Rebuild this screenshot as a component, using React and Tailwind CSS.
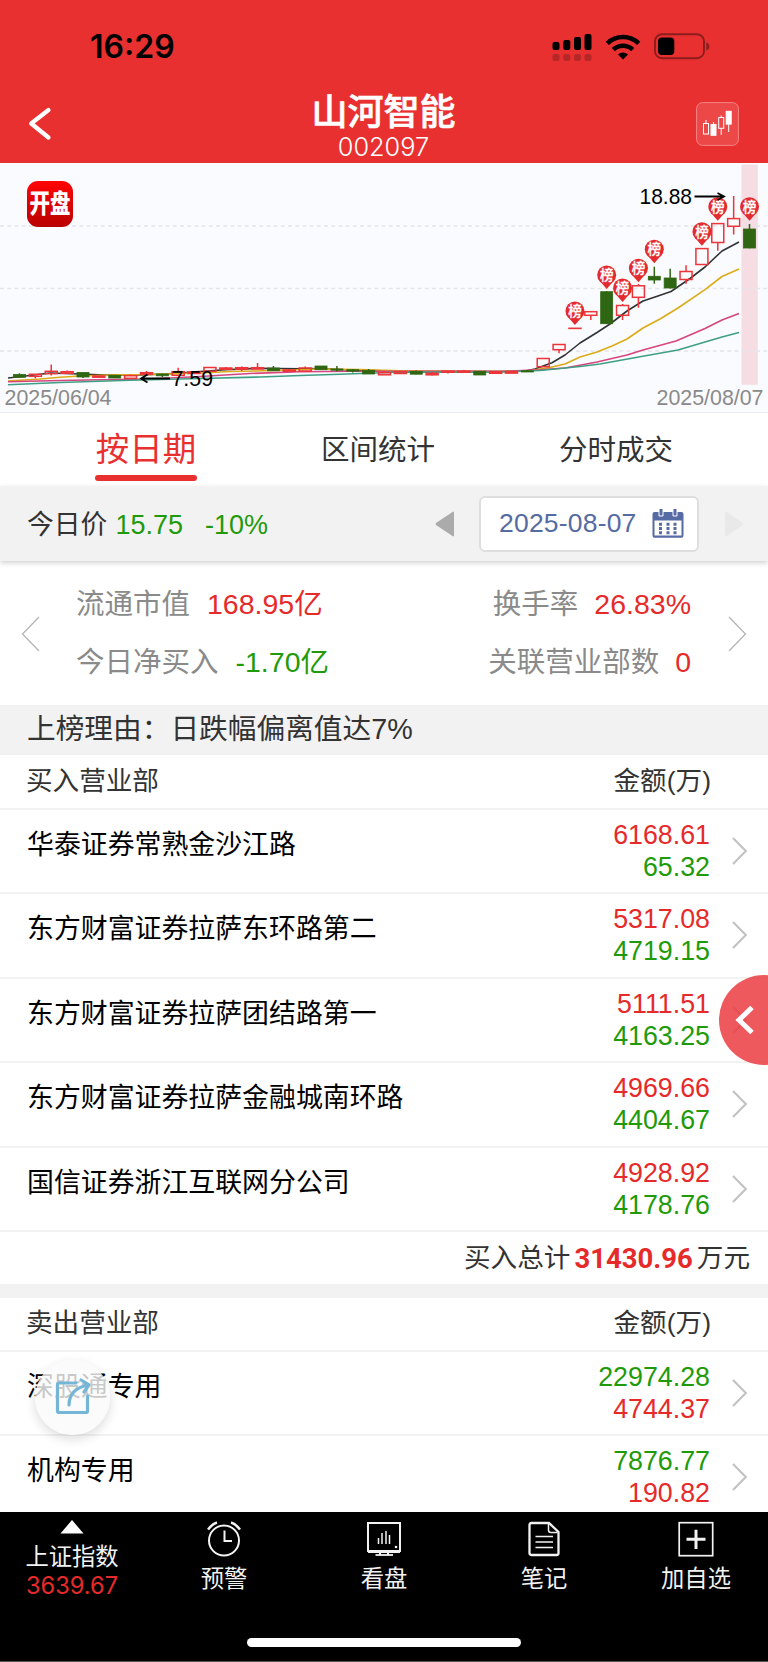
import clsx from 'clsx';

const STEP = 15.87;
const FIRST_X = 19.5;

// [direction, body top, body bottom, high, low]
const candles = [
  ['down', 374.5, 377.3, 373.3, 377.5],
  ['up', 374.3, 376.3, 374.3, 378.3],
  ['up', 371.3, 373.7, 364.5, 375.5],
  ['up', 371.7, 373.3, 370.5, 374],
  ['down', 372.5, 377, 372.5, 378],
  ['up', 376, 377.2, 376, 377.2],
  ['down', 375.3, 378, 375, 378],
  ['up', 375.7, 378.3, 374.5, 378.3],
  ['up', 372.7, 374.2, 371, 376],
  ['down', 374, 375.8, 373.5, 377],
  ['up', 371.7, 375.3, 367.7, 375.3],
  ['up', 372, 373.5, 371, 373.5],
  ['up', 367.5, 371.3, 367.5, 371.3],
  ['up', 368, 369.3, 367, 369.3],
  ['up', 367.7, 369.2, 366.5, 371],
  ['up', 367.7, 369, 363, 369],
  ['down', 368, 370.8, 366, 370.8],
  ['up', 370, 371.2, 369, 371.2],
  ['up', 368, 371, 366.5, 371],
  ['down', 366, 369.7, 366, 369.7],
  ['down', 369, 370.2, 366, 371.5],
  ['down', 369.7, 371.2, 369, 372.5],
  ['down', 370.3, 374, 369, 374],
  ['up', 372.7, 374.8, 371, 374.8],
  ['up', 371.7, 373.5, 371.7, 373.5],
  ['down', 371.5, 374.2, 370.5, 374.2],
  ['up', 373.3, 374.8, 372, 375.5],
  ['up', 371.2, 372.2, 371, 373.5],
  ['up', 371.2, 372.2, 370, 372.2],
  ['down', 371.3, 375, 371, 375],
  ['up', 371.8, 373.3, 371.8, 373.3],
  ['up', 371.6, 373.1, 371.6, 373.1],
  ['down', 370.7, 372, 370.2, 372],
  ['up', 358.5, 366.7, 358.5, 366.7],
  ['up', 344.5, 349.7, 344.5, 353.3],
  ['up', 328.3, 328.4, 328.3, 328.4],
  ['up', 311.7, 315.3, 311.7, 320],
  ['down', 291.7, 323.7, 291, 324],
  ['up', 305.5, 315.3, 304, 320],
  ['up', 285.8, 297.3, 284, 307.7],
  ['down', 276.3, 280, 266.7, 283.7],
  ['down', 278, 288, 268.7, 288.5],
  ['up', 271.5, 279.5, 265.3, 283.7],
  ['up', 248.6, 264.5, 248.6, 264.5],
  ['up', 223.6, 242.5, 223.6, 250.7],
  ['up', 218.6, 226.3, 196, 234.5],
  ['down', 229, 248, 224, 248.3],
];

const badges = [
  { index: 35, y: 311 },
  { index: 37, y: 275 },
  { index: 38, y: 288 },
  { index: 39, y: 268.3 },
  { index: 40, y: 249.3 },
  { index: 43, y: 231.7 },
  { index: 44, y: 206.7 },
  { index: 46, y: 206.7 },
];

const averages = [
  {
    color: '#333333',
    points: '8,378 30,375.5 50,373 80,374 105,375 140,375 165,374 200,371.5 225,369.7 257,368.3 300,368.7 320,368.5 350,370 400,371.3 500,371.5 525,371 535,369 552,362.7 565,355 580,343 597,332.5 610,324 627,311 643,301 658,296 671,291.5 690,278.5 705,267 722,251 739,242',
  },
  {
    color: '#dcab15',
    points: '8,381 40,379 60,377.3 80,376 120,374.7 150,374.5 200,373 230,371.5 257,371 320,369 360,369.5 400,370.7 500,371.5 530,370.5 550,367.5 565,364 580,357 597,352 612,346 627,339 643,328 660,319 678,308 705,289.7 722,276.5 739,269',
  },
  {
    color: '#d6457f',
    points: '8,381.7 60,380.5 100,379.7 150,379 200,376.5 250,373.5 300,371.7 350,371.3 400,371.3 510,371 540,369.7 565,368 597,362 627,355 643,350 676,341 705,328.5 722,320 739,313.5',
  },
  {
    color: '#3f9f84',
    points: '8,384.7 60,382.5 130,380.3 200,378.5 260,377 300,375.5 340,374.3 400,372 460,372.3 500,372 540,370.5 580,366.5 600,364 640,356.7 678,350 705,342 722,337 739,332.5',
  },
];

const buyers = [
  { name: '华泰证券常熟金沙江路', buy: '6168.61', sell: '65.32' },
  { name: '东方财富证券拉萨东环路第二', buy: '5317.08', sell: '4719.15' },
  { name: '东方财富证券拉萨团结路第一', buy: '5111.51', sell: '4163.25' },
  { name: '东方财富证券拉萨金融城南环路', buy: '4969.66', sell: '4404.67' },
  { name: '国信证券浙江互联网分公司', buy: '4928.92', sell: '4178.76' },
];

const sellers = [
  { name: '深股通专用', buy: '4744.37', sell: '22974.28' },
  { name: '机构专用', buy: '190.82', sell: '7876.77' },
];

const StatusBar = () => (
  <div className="flex h-[90px] items-center justify-between pt-[3px] pl-[90px] pr-[57px]">
    <span className="font-[Inter] text-[32px] leading-none font-semibold text-black">16:29</span>
    <div className="flex items-center">
      <svg width="40" height="28" viewBox="0 0 40 28">
        <rect x="0.5" y="9" width="7" height="8" rx="2" />
        <rect x="11.3" y="7" width="7" height="10" rx="2" />
        <rect x="22" y="4" width="7" height="13" rx="2" />
        <rect x="32.5" y="1" width="7" height="16" rx="2" />
        <g fill="#b82727">
          <rect x="0.5" y="21" width="7" height="7" rx="2.2" />
          <rect x="11.3" y="21" width="7" height="7" rx="2.2" />
          <rect x="22" y="21" width="7" height="7" rx="2.2" />
          <rect x="32.5" y="21" width="7" height="7" rx="2.2" />
        </g>
      </svg>
      <svg className="ml-[13px]" width="36" height="26" viewBox="0 0 36 26">
        <path d="M18 25.5l5-5.1a7.2 7.2 0 0 0-10 0z" />
        <path d="M8.3 15.6a14 14 0 0 1 19.4 0" fill="none" stroke="#000" strokeWidth="4.6" />
        <path d="M2.3 9.3a22.6 22.6 0 0 1 31.4 0" fill="none" stroke="#000" strokeWidth="4.6" />
      </svg>
      <svg className="ml-[13px]" width="57" height="27" viewBox="0 0 57 27">
        <rect x="1" y="1.2" width="49" height="24" rx="7" fill="none" stroke="#8c1d1d" strokeWidth="1.9" />
        <rect x="4" y="4.5" width="16.3" height="17.6" rx="4" />
        <path d="M52.3 9.2c4 1.6 4 6.8 0 8.4z" fill="#8c1d1d" />
      </svg>
    </div>
  </div>
);

const Header = () => (
  <header className="h-[163px] bg-[#e93030]">
    <StatusBar />
    <div className="flex h-[73px] items-start justify-between pl-[28px] pr-[29px] text-white">
      <svg className="mt-[17px] w-[43px]" height="34" viewBox="0 0 43 34" fill="none" stroke="currentColor" strokeWidth="4.2" strokeLinecap="round" strokeLinejoin="round">
        <path d="M20.5 3L3.2 16.5L20.5 30.5" />
      </svg>
      <div className="flex flex-col items-center">
        <h1 className="mt-[5px] text-[36px] leading-[36px] font-medium [-webkit-text-stroke:0.6px_#fff]">山河智能</h1>
        <span className="mt-[3px] font-[Inter] text-[25.3px] leading-[26px] font-light">002097</span>
      </div>
      <svg className="mt-[12px]" width="43" height="44" viewBox="0 0 43 44" fill="none" stroke="#fff">
        <rect x="0.6" y="0.6" width="41.8" height="42.8" rx="6" fill="#ec4848" stroke="#f58585" strokeWidth="1" />
        <rect x="7.5" y="21.5" width="5" height="10.5" />
        <path d="M10 18v3.5M17.5 20v3M25.2 13.5v2M25.2 26.5v6.3M32.7 22v8" />
        <rect x="15" y="22.5" width="5" height="10.8" fill="#fff" />
        <rect x="22.7" y="15.5" width="5" height="10.8" />
        <rect x="30.2" y="9.3" width="5" height="12.8" fill="#fff" />
      </svg>
    </div>
  </header>
);

const Candle = ({ index, direction, top, bottom, high, low }) => {
  const x = FIRST_X + index * STEP;
  if (direction === 'down') {
    return (
      <g fill="#2f6613" stroke="#2f6613">
        <path d={`M${x} ${high}V${low}`} strokeWidth="1.5" />
        <rect x={x - 6} y={top} width="12" height={bottom - top} strokeWidth="0.8" />
      </g>
    );
  }
  return (
    <g fill="none" stroke="#ec3439" strokeWidth="1.5">
      <path d={`M${x} ${high}V${top}M${x} ${bottom}V${low}`} />
      <rect x={x - 6} y={top} width="12" height={bottom - top} />
    </g>
  );
};

const KLineChart = () => (
  <section className="relative h-[250px] border-b border-[#ececf2] bg-[#fafbff]">
    <svg className="block" width="768" height="249" viewBox="0 163 768 249">
      <rect x="741.5" y="164.5" width="16.3" height="220.3" fill="#f6dde4" />
      <path d="M0 226H768M0 288.5H768M0 351H768" stroke="#e4e5ea" strokeWidth="1.4" strokeDasharray="4 3.2" />
      {averages.map((line) => (
        <polyline key={line.color} points={line.points} fill="none" stroke={line.color} strokeWidth="1.6" strokeLinejoin="round" />
      ))}
      {candles.map(([direction, top, bottom, high, low], index) => (
        <Candle key={index} index={index} direction={direction} top={top} bottom={bottom} high={high} low={low} />
      ))}
      {badges.map(({ index, y }) => {
        const x = FIRST_X + index * STEP;
        return (
          <g key={index}>
            <circle cx={x} cy={y} r="9.5" fill="#e32b2f" />
            <path d={`M${x - 6.5} ${y + 6.5}L${x} ${y + 14}L${x + 6.5} ${y + 6.5}z`} fill="#e32b2f" />
            <text x={x} y={y + 5} fill="#fff" stroke="#fff" strokeWidth="0.3" fontSize="13.5" fontWeight="500" textAnchor="middle">榜</text>
          </g>
        );
      })}
      <g fill="none" stroke="#000" strokeWidth="1.8">
        <path d="M694.5 196.5H723.5M717.5 193L724 196.5L717.5 200" />
        <path d="M170 378.5H141.5M147.5 374.5L141 378.5L147.5 382.5" />
      </g>
      <text x="639.5" y="203.7" fontSize="22" textLength="52.5" lengthAdjust="spacingAndGlyphs">18.88</text>
      <text x="171.5" y="386.2" fontSize="22" textLength="41.5" lengthAdjust="spacingAndGlyphs">7.59</text>
      <g fill="#8a8a8a" fontSize="22">
        <text x="4.5" y="405.2" textLength="107" lengthAdjust="spacingAndGlyphs">2025/06/04</text>
        <text x="656.5" y="405.2" textLength="107" lengthAdjust="spacingAndGlyphs">2025/08/07</text>
      </g>
    </svg>
    <div className="absolute top-[18px] left-[27px] flex h-[46px] w-[46px] items-center justify-center rounded-[11px] bg-linear-to-b from-[#ff0505] to-[#b90000] text-[20.5px] leading-none font-black whitespace-nowrap text-white">
      <span className="scale-y-125">开盘</span>
    </div>
  </section>
);

const Tabs = () => (
  <nav className="flex h-[73px] items-center justify-between pr-[95px] pl-[95px] text-[28.5px] text-[#333]">
    <div className="flex h-full w-[102px] flex-col items-center">
      <span className="mt-[15px] text-[33.5px] leading-[44px] text-[#e93030]">按日期</span>
      <span className="mt-[3px] h-[5.5px] w-full rounded-full bg-[#e93030]" />
    </div>
    <span className="leading-[40px]">区间统计</span>
    <span className="leading-[40px]">分时成交</span>
  </nav>
);

const PriceBar = () => (
  <div className="flex h-[75px] items-center bg-[#f2f2f2] pl-[27px] shadow-[0_2px_5px_rgba(0,0,0,0.18)]">
    <div className="flex items-center pt-[3px]">
      <span className="text-[26.8px] text-[#333]">今日价</span>
      <span className="ml-[8px] text-[27px] text-[#1f9a0a]">15.75</span>
      <span className="ml-[22px] text-[27px] text-[#1f9a0a]">-10%</span>
    </div>
    <div className="ml-auto flex items-center">
      <svg width="20" height="26" viewBox="0 0 20 26">
        <path d="M19 1.5V24.5Q19 26 17.5 25L1 14Q0 13 1 12L17.5 1Q19 0 19 1.5z" fill="#ababab" />
      </svg>
      <div className="ml-[24px] flex h-[56px] w-[220px] items-center rounded-md border-2 border-[#dedede] bg-white pl-[18px]">
        <span className="pt-[1px] text-[26.5px] tracking-[0.2px] text-[#566ba3]">2025-08-07</span>
        <svg className="ml-[15px] shrink-0" width="32" height="29" viewBox="0 0 32 29" fill="#566ba3">
          <path d="M2.5 3H29.5Q31.5 3 31.5 5V26.5Q31.5 28.8 29.5 28.8H2.5Q0.5 28.8 0.5 26.5V5Q0.5 3 2.5 3zM2.5 11.5V26.5H29.5V11.5z" fillRule="evenodd" />
          <path d="M7 -1h4v8H7zM21 -1h4v8h-4z" stroke="#fff" strokeWidth="1" />
          <path d="M7 13.8h3v3H7zM14.5 13.8h3v3h-3zM21.5 13.8h3v3h-3zM7 18h3v3H7zM14.5 18h3v3h-3zM21.5 18h3v3h-3zM7 22.2h3v3H7zM14.5 22.2h3v3h-3zM21.5 22.2h3v3h-3z" />
        </svg>
      </div>
      <svg className="mr-[24px] ml-[25px]" width="20" height="26" viewBox="0 0 20 26">
        <path d="M1 1.5V24.5Q1 26 2.5 25L19 14Q20 13 19 12L2.5 1Q1 0 1 1.5z" fill="#e9e9e9" />
      </svg>
    </div>
  </div>
);

const Stat = ({ label, value, color, gap }) => (
  <div className="flex h-[57.5px] items-center text-[28.5px] whitespace-nowrap">
    <span className="text-[#8a8a8a]">{label}</span>
    <span className={clsx(color, gap)}>{value}</span>
  </div>
);

const Stats = () => (
  <section className="flex h-[144px] justify-between pt-[15px]">
    <svg className="mt-[40px] ml-[21px]" width="19" height="36" viewBox="0 0 19 36" fill="none" stroke="#b5b5b5" strokeWidth="1.3">
      <path d="M18 1L1.5 18L18 35" />
    </svg>
    <div className="ml-[36px] flex-1">
      <Stat label="流通市值" value="168.95亿" color="text-[#e62a2a]" gap="ml-[17px]" />
      <Stat label="今日净买入" value="-1.70亿" color="text-[#1f9a0a]" gap="ml-[17px]" />
    </div>
    <div className="flex flex-col items-end">
      <Stat label="换手率" value="26.83%" color="text-[#e62a2a]" gap="ml-[16px]" />
      <Stat label="关联营业部数" value="0" color="text-[#e62a2a]" gap="ml-[16px]" />
    </div>
    <svg className="mt-[40px] mr-[21px] ml-[37px]" width="19" height="36" viewBox="0 0 19 36" fill="none" stroke="#b5b5b5" strokeWidth="1.3">
      <path d="M1 1L17.5 18L1 35" />
    </svg>
  </section>
);

const TableHead = ({ title }) => (
  <div className="flex h-full items-center justify-between border-b-2 border-[#f2f2f2] pr-[57px] pl-[26px] text-[26.6px] text-[#333]">
    <span>{title}</span>
    <span>金额(万)</span>
  </div>
);

const BrokerRow = ({ name, first, second, firstColor, secondColor }) => (
  <div className="flex h-[84.4px] shrink-0 border-b-2 border-[#f2f2f2] pl-[27px]">
    <span className="mt-[13px] text-[26.9px] leading-[44px] text-black">{name}</span>
    <div className="mt-[9px] ml-auto flex flex-col text-right text-[26.8px] leading-[32px]">
      <span className={firstColor}>{first}</span>
      <span className={secondColor}>{second}</span>
    </div>
    <svg className="mt-[26px] mr-[20px] ml-[21px]" width="17" height="30" viewBox="0 0 17 30" fill="none" stroke="#c3c3c3" strokeWidth="2.2">
      <path d="M2 2L14.8 15L2 28" />
    </svg>
  </div>
);

const NavItem = ({ label, className, children }) => (
  <div className={clsx('flex flex-col items-center', className)}>
    <svg className="mt-[9px]" width="36" height="36" viewBox="0 0 36 36" fill="none" stroke="currentColor" strokeWidth="2">
      {children}
    </svg>
    <span className="mt-[6px] text-[23.3px] leading-[32px]">{label}</span>
  </div>
);

const BottomNav = () => (
  <footer className="flex h-[150px] flex-col border-b border-[#555] bg-black text-[#f2f2f2]">
    <div className="flex h-[126px]">
      <div className="flex w-[144px] flex-col items-center">
        <svg className="mt-[8px]" width="24" height="14" viewBox="0 0 24 14" fill="#fff">
          <path d="M12 0L23.5 13.5H0.5z" />
        </svg>
        <span className="mt-[7px] text-[23.3px] leading-[32px]">上证指数</span>
        <span className="font-[Inter] text-[23.6px] leading-[26px] text-[#e62a2a]">3639.67</span>
      </div>
      <NavItem label="预警" className="w-[160px]">
        <circle cx="18" cy="19.5" r="15" />
        <path d="M18.5 9.5V20H26" />
        <path d="M2 8.5Q6 3 11 1.5M34 8.5Q30 3 25 1.5" strokeWidth="2.4" />
      </NavItem>
      <NavItem label="看盘" className="w-[160px]">
        <rect x="2" y="2" width="32" height="28" />
        <path d="M2 30.5H34" strokeWidth="3" />
        <path d="M9.5 34H27" strokeWidth="1.8" />
        <path d="M14 31V34M22 31V34" />
        <path d="M12.5 17v6M16 12v11M20 10v13M23.5 14v9" strokeWidth="1.5" />
        <circle cx="30" cy="26" r="1.3" fill="currentColor" stroke="none" />
      </NavItem>
      <NavItem label="笔记" className="w-[160px]">
        <path d="M5 2H23L32.5 11V32Q32.5 34 30.500 34H6Q3.5 34 3.5 32V4Q3.5 2 5.5 2z" strokeWidth="2.3" />
        <path d="M22.5 2.5V9Q22.5 11.5 25 11.5H31.5" strokeWidth="1.5" />
        <path d="M9.5 15.5H27M9.500 21H27M9.500 26.5H27" strokeWidth="1.7" />
      </NavItem>
      <NavItem label="加自选" className="w-[144px]">
        <rect x="1.2" y="1.7" width="33.5" height="33" strokeWidth="1.7" />
        <path d="M8.5 18.2H27.5M18 8.7V28" strokeWidth="3" />
      </NavItem>
    </div>
    <div className="mx-auto h-[9px] w-[274px] rounded-full bg-white" />
  </footer>
);

export default function App() {
  return (
    <div className="relative h-[1662px] w-[768px] overflow-hidden bg-white font-['Liberation_Sans','Noto_Sans_CJK_SC',sans-serif]">
      <Header />
      <KLineChart />
      <Tabs />
      <PriceBar />
      <Stats />

      <div className="flex h-[50px] items-center bg-[#f2f2f2] pl-[27px] text-[28.7px] text-[#333]">
        上榜理由：日跌幅偏离值达7%
      </div>

      <div className="flex h-[529px] flex-col">
        <div className="h-[55px]">
          <TableHead title="买入营业部" />
        </div>
        {buyers.map((row) => (
          <BrokerRow key={row.name} name={row.name} first={row.buy} second={row.sell} firstColor="text-[#e62a2a]" secondColor="text-[#1f9a0a]" />
        ))}
        <div className="flex flex-1 items-center justify-end pt-[2px] pr-[18px] text-[26.6px] text-[#333]">
          <span>买入总计</span>
          <span className="mx-[4px] font-[Roboto] text-[27.5px] font-bold text-[#e62a2a]">31430.96</span>
          <span>万元</span>
        </div>
      </div>

      <div className="h-[14px] bg-[#f2f2f2]" />

      <div className="flex h-[214px] flex-col overflow-hidden">
        <div className="h-[54px] shrink-0">
          <TableHead title="卖出营业部" />
        </div>
        {sellers.map((row) => (
          <BrokerRow key={row.name} name={row.name} first={row.sell} second={row.buy} firstColor="text-[#1f9a0a]" secondColor="text-[#e62a2a]" />
        ))}
      </div>

      <BottomNav />

      {/* Side drawer handle */}
      <button className="absolute top-[975px] left-[719px] h-[90px] w-[90px] rounded-full bg-[#ea3c3f]/85 pl-[16px]">
        <svg width="20" height="30" viewBox="0 0 20 30" fill="none" stroke="#fff" strokeWidth="5">
          <path d="M17 2.5L4 15L17 27.5" />
        </svg>
      </button>

      {/* Floating share button */}
      <button className="absolute top-[1360px] left-[35px] flex h-[75px] w-[75px] items-center justify-center rounded-full bg-[#fafafa]/80 pb-[2px] shadow-[0_4px_12px_rgba(0,0,0,0.14)]">
        <svg width="38" height="38" viewBox="0 0 38 38" fill="none" stroke="#75b5d8" strokeWidth="3.2" strokeLinecap="round" strokeLinejoin="round">
          <path d="M22 5H5Q3.5 5 3.5 6.5V33Q3.5 34.5 5 34.5H32Q33.5 34.5 33.5 33V18" />
          <path d="M15 27Q15 11 34 7M27 2L35 6.8L30 14" />
        </svg>
      </button>
    </div>
  );
}
